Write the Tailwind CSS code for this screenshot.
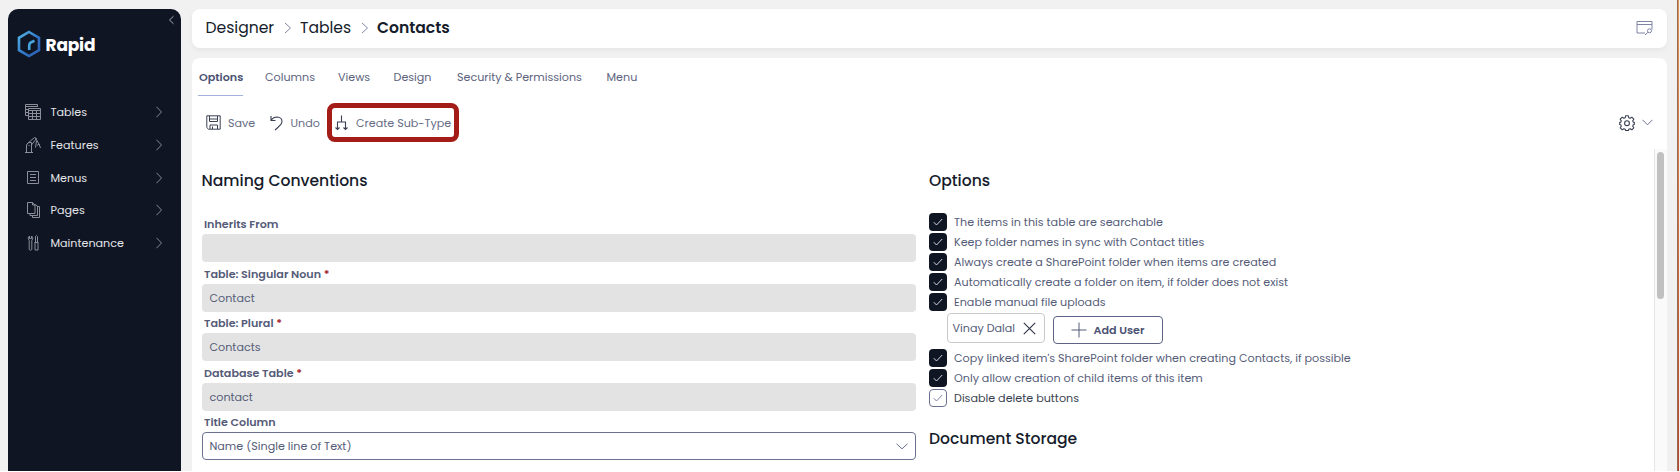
<!DOCTYPE html>
<html lang="en">
<head>
<meta charset="utf-8">
<title>Designer - Tables - Contacts</title>
<script src="https://cdn.jsdelivr.net/npm/@tailwindcss/browser@4"></script>
</head>
<body class="bg-white">
<div class="relative flex h-[471px] w-[1680px] overflow-hidden bg-[#f1f1f1] pl-[7.5px] pt-[9px] font-['Poppins','Inter',sans-serif] text-[11.15px] leading-[18px] text-[#555c78]">

  <!-- Sidebar -->
  <aside class="relative h-full w-[173.5px] shrink-0 rounded-t-[10px] bg-[#0f1523] text-[#e4e5e9]">
    <svg class="absolute right-[6px] top-[6px] h-[10px] w-[7px]" viewBox="0 0 7 10" fill="none" stroke="#a7aab3" stroke-width="1"><path d="M5.5 1.2 1.5 5l4 3.8"/></svg>
    <div class="flex items-center gap-[4.5px] pl-[9.5px] pt-[20.5px]">
      <svg class="h-[28px] w-[24px]" viewBox="0 0 24 28" fill="none">
        <defs><linearGradient id="lg" x1="0" y1="0" x2="1" y2="1"><stop offset="0" stop-color="#53b6e6"/><stop offset=".55" stop-color="#3277c8"/><stop offset="1" stop-color="#2a5db0"/></linearGradient></defs>
        <path d="M12 2 22 7.8v12.4L12 26 2 20.2V7.8z" stroke="url(#lg)" stroke-width="2.6"/>
        <path d="M12.2 20v-4.3q0-2.500 2.100-3.500l3.200-1.400" stroke="#45a5de" stroke-width="2.6"/>
      </svg>
      <span class="pt-[2px] text-[17px] font-bold leading-[26px] tracking-[-0.2px] text-white">Rapid</span>
    </div>
    <nav class="mt-[38.5px] flex flex-col pl-[16px] pr-[18.5px]">
      <a class="flex h-[32.7px] items-center"><svg class="mr-[9px] h-[18px] w-[18px]" viewBox="0 0 18 18" fill="none" stroke="#8c8f99"><path d="M4 12.5H1.5v-11h12V4M1.5 3.5h12M1.5 6.5H4M1.5 9.5H4M4.5 5.500h12v11h-12zM4.500 7.500h12M4.500 10.500h12M4.500 13.500h12M8.500 7.500v9M12.500 7.500v9"/></svg><span class="grow">Tables</span><svg class="h-[12px] w-[8px]" viewBox="0 0 8 12" fill="none" stroke="#858892"><path d="m1.500 .8 5 5.200-5 5.200"/></svg></a>
      <a class="flex h-[32.7px] items-center"><svg class="mr-[9px] h-[18px] w-[18px]" viewBox="0 0 18 18" fill="none" stroke="#8c8f99"><path d="M1 16.500h8M2.500 16.500V9l2-2.500h3V16.500M4.500 9.500h1M3 8l7.500-6.500 2 1L7.500 9M11.500 2l4 7M12.500 5l-1 6.500M15 8l-2 1.500M15 8l1.500 4"/></svg><span class="grow">Features</span><svg class="h-[12px] w-[8px]" viewBox="0 0 8 12" fill="none" stroke="#858892"><path d="m1.500 .8 5 5.200-5 5.200"/></svg></a>
      <a class="flex h-[32.7px] items-center"><svg class="mr-[9px] h-[18px] w-[18px]" viewBox="0 0 18 18" fill="none" stroke="#8c8f99"><path d="M3.500 2.500h11v12h-11zM6 5.500h6M6 8.500h6M6 11.500h6"/></svg><span class="grow">Menus</span><svg class="h-[12px] w-[8px]" viewBox="0 0 8 12" fill="none" stroke="#858892"><path d="m1.500 .8 5 5.200-5 5.200"/></svg></a>
      <a class="flex h-[32.7px] items-center"><svg class="mr-[9px] h-[18px] w-[18px]" viewBox="0 0 18 18" fill="none" stroke="#8c8f99"><path d="M3.500 1.500h5L11 4v8.500H3.500zM8.500 1.500V4H11M11 3.500l2.500 1.500v9.500H6v-2M13.500 5.500h2v11H8.500v-2"/></svg><span class="grow">Pages</span><svg class="h-[12px] w-[8px]" viewBox="0 0 8 12" fill="none" stroke="#858892"><path d="m1.500 .8 5 5.200-5 5.200"/></svg></a>
      <a class="flex h-[32.7px] items-center"><svg class="mr-[9px] h-[18px] w-[18px]" viewBox="0 0 18 18" fill="none" stroke="#8c8f99"><path d="M5.500 2v2.500h2V2q1.500 1 1.200 2.800L7.800 6.500v9q-1.300 1.500-2.600 0v-9L4.300 4.800Q4 3 5.500 2zM11.500 8V2.500l1-1 1 1V8M10.500 8.500h4M11 9v7h3V9"/></svg><span class="grow">Maintenance</span><svg class="h-[12px] w-[8px]" viewBox="0 0 8 12" fill="none" stroke="#858892"><path d="m1.500 .8 5 5.200-5 5.200"/></svg></a>
    </nav>
  </aside>

  <main class="ml-[10.500px] flex w-[1475.500px] shrink-0 flex-col">
    <!-- Breadcrumb -->
    <header class="flex h-[38.500px] shrink-0 items-center rounded-[8px] bg-white pl-[14px] pr-[14.500px] text-[15.600px] text-[#161c2b] shadow-[0_2px_5px_rgba(0,0,0,0.05)]">
      <span class="w-[69px]">Designer</span>
      <svg class="ml-[9.500px] mr-[8px] h-[12px] w-[8px]" viewBox="0 0 8 12" fill="none" stroke="#8186a0"><path d="m1 1 5.500 5L1 11"/></svg>
      <span class="w-[52px]">Tables</span>
      <svg class="ml-[9px] mr-[8px] h-[12px] w-[8px]" viewBox="0 0 8 12" fill="none" stroke="#8186a0"><path d="m1 1 5.500 5L1 11"/></svg>
      <span class="font-semibold">Contacts</span>
      <svg class="ml-auto h-[16px] w-[17px]" viewBox="0 0 17 16" fill="none" stroke="#7d84a6"><path d="M9 13H1V1.500h15v8M1 4.500h15"/><circle cx="13.500" cy="10.800" r="2"/><path d="m12 12.300-3 2.700"/></svg>
    </header>

    <section class="mt-[10.500px] flex grow flex-col rounded-t-[8px] bg-white">
      <!-- Tabs -->
      <div class="flex h-[38px] shrink-0 pl-[6.500px] text-[#5c637e]">
        <div class="flex w-[45px] flex-col border-b-[1.500px] border-[#a3b1dc] pl-[1px] pt-[10px] font-semibold text-[#4b5272]">Options</div>
        <div class="ml-[22px] w-[73px] pt-[10px]">Columns</div>
        <div class="w-[55.500px] pt-[10px]">Views</div>
        <div class="w-[63.500px] pt-[10px]">Design</div>
        <div class="w-[149.500px] whitespace-nowrap pt-[10px]">Security &amp; Permissions</div>
        <div class="pt-[10px]">Menu</div>
      </div>

      <!-- Toolbar -->
      <div class="flex h-[53px] shrink-0 items-center pl-[14px] pr-[14px] text-[#666c86]">
        <svg class="mr-[7.500px] h-[15px] w-[15px] shrink-0" viewBox="0 0 15 15" fill="none" stroke="#3a4052"><path d="M.8.800h13.400v13.400H2.500L.8 12.500zM3.500 1v5.500h8V1M3.500 4h8M4 14v-4h7.500v4M6.500 11.500V14"/></svg>
        <span class="w-[42px]">Save</span>
        <svg class="mr-[7.500px] h-[16px] w-[13px] shrink-0" viewBox="0 0 13 16" fill="none" stroke="#3a4052" stroke-width="1.100"><path d="M1 1v4.500h4.500M1 5.200Q3.500 2 7 2q5 .2 5 4.600c0 3-2.500 4.500-7 8.400"/></svg>
        <span class="w-[36px]">Undo</span>
        <div class="flex h-[39.500px] w-[132.500px] shrink-0 items-center rounded-[8px] border-[5px] border-[#a31c17] pl-[3px]">
          <svg class="mr-[8.500px] h-[16px] w-[13px] shrink-0" viewBox="0 0 13 16" fill="none" stroke="#3a4052" stroke-width="1.100"><path d="M6.500.5V7M2.500 14.500V7h8v7.500M.5 12.500l2 2 2-2M8.500 12.500l2 2 2-2"/></svg>
          <span class="whitespace-nowrap">Create Sub-Type</span>
        </div>
        <svg class="ml-auto h-[16px] w-[16px]" viewBox="0 0 16 16" fill="none" stroke="#3a4052" stroke-width="1.100" stroke-linejoin="round"><path d="M6.600.8h2.800l.4 2 1.300.5 1.700-1.100 2 2-1.100 1.700.5 1.200 1.100.3v2l-1.100.4-.5 1.300 1.100 1.700-2 2-1.700-1.100-1.300.5-.4 1.300H6.600l-.4-1.300-1.300-.5-1.700 1.100-2-2 1.100-1.700-.5-1.300-1.100-.4v-2l1.100-.3.500-1.200-1.100-1.700 2-2 1.700 1.100 1.300-.5z"/><circle cx="8" cy="8.200" r="2.400"/></svg>
        <svg class="ml-[7px] h-[7px] w-[11px]" viewBox="0 0 11 7" fill="none" stroke="#6b7190"><path d="m.5.800 5 5 5-5"/></svg>
      </div>

      <!-- Scrolling form -->
      <div class="flex grow">
        <div class="ml-[10px] w-[714px] pt-[19px]">
          <h2 class="mb-[21px] text-[15.600px] font-medium leading-[26px] text-[#161c2b]">Naming Conventions</h2>
          <div class="h-[49.500px]"><div class="h-[19px] pl-[2.500px] font-semibold">Inherits From</div><div class="h-[28px] rounded-[4px] bg-[#e3e3e3]"></div></div>
          <div class="h-[49.500px]"><div class="h-[19px] pl-[2.500px] font-semibold">Table: Singular Noun <span class="text-[#a4262c]">*</span></div><div class="flex h-[28px] items-center rounded-[4px] bg-[#e3e3e3] pl-[8px]">Contact</div></div>
          <div class="h-[49.500px]"><div class="h-[19px] pl-[2.500px] font-semibold">Table: Plural <span class="text-[#a4262c]">*</span></div><div class="flex h-[28px] items-center rounded-[4px] bg-[#e3e3e3] pl-[8px]">Contacts</div></div>
          <div class="h-[49.500px]"><div class="h-[19px] pl-[2.500px] font-semibold">Database Table <span class="text-[#a4262c]">*</span></div><div class="flex h-[28px] items-center rounded-[4px] bg-[#e3e3e3] pl-[8px]">contact</div></div>
          <div class="h-[49.500px]"><div class="h-[19px] pl-[2.500px] font-semibold">Title Column</div><div class="flex h-[28px] items-center justify-between rounded-[4px] border border-[#6b7190] pl-[7px] pr-[7px]"><span>Name (Single line of Text)</span><svg class="h-[7px] w-[12px]" viewBox="0 0 12 7" fill="none" stroke="#6b7190"><path d="m.5.800 5.500 5 5.500-5"/></svg></div></div>
        </div>

        <div class="ml-[13.500px] grow pt-[19px]">
          <h2 class="mb-[18px] text-[15.600px] font-medium leading-[26px] text-[#161c2b]">Options</h2>
          <div class="flex h-[20px] items-center"><span class="mr-[7px] flex h-[18px] w-[18px] items-center justify-center rounded-[4px] bg-[#0f1523]"><svg class="h-[8px] w-[10px]" viewBox="0 0 10 8" fill="none" stroke="#d5d7de"><path d="M.8 4.200 3.500 7l5.700-6"/></svg></span><span>The items in this table are searchable</span></div>
          <div class="flex h-[20px] items-center"><span class="mr-[7px] flex h-[18px] w-[18px] items-center justify-center rounded-[4px] bg-[#0f1523]"><svg class="h-[8px] w-[10px]" viewBox="0 0 10 8" fill="none" stroke="#d5d7de"><path d="M.8 4.200 3.500 7l5.700-6"/></svg></span><span>Keep folder names in sync with Contact titles</span></div>
          <div class="flex h-[20px] items-center"><span class="mr-[7px] flex h-[18px] w-[18px] items-center justify-center rounded-[4px] bg-[#0f1523]"><svg class="h-[8px] w-[10px]" viewBox="0 0 10 8" fill="none" stroke="#d5d7de"><path d="M.8 4.200 3.500 7l5.700-6"/></svg></span><span>Always create a SharePoint folder when items are created</span></div>
          <div class="flex h-[20px] items-center"><span class="mr-[7px] flex h-[18px] w-[18px] items-center justify-center rounded-[4px] bg-[#0f1523]"><svg class="h-[8px] w-[10px]" viewBox="0 0 10 8" fill="none" stroke="#d5d7de"><path d="M.8 4.200 3.500 7l5.700-6"/></svg></span><span>Automatically create a folder on item, if folder does not exist</span></div>
          <div class="flex h-[20px] items-center"><span class="mr-[7px] flex h-[18px] w-[18px] items-center justify-center rounded-[4px] bg-[#0f1523]"><svg class="h-[8px] w-[10px]" viewBox="0 0 10 8" fill="none" stroke="#d5d7de"><path d="M.8 4.200 3.500 7l5.700-6"/></svg></span><span>Enable manual file uploads</span></div>
          <div class="flex h-[36px] items-start pl-[18px] pt-px">
            <div class="flex h-[30px] w-[97.500px] items-center rounded-[4px] border border-[#c9c9cc] pl-[4.500px]"><span class="w-[70px]">Vinay Dalal</span><svg class="h-[13px] w-[13px]" viewBox="0 0 13 13" fill="none" stroke="#2c3244" stroke-width="1.100"><path d="m.8.800 11.400 11.400M12.200.8.800 12.200"/></svg></div>
            <div class="ml-[8px] mt-[3px] flex h-[28px] w-[110px] items-center rounded-[4px] border border-[#5c6384] pl-[17.500px] font-semibold text-[#4b5272]"><svg class="mr-[6.500px] h-[16px] w-[16px]" viewBox="0 0 16 16" fill="none" stroke="#555c78"><path d="M8 .5v15M.5 8h15"/></svg><span>Add User</span></div>
          </div>
          <div class="flex h-[20px] items-center"><span class="mr-[7px] flex h-[18px] w-[18px] items-center justify-center rounded-[4px] bg-[#0f1523]"><svg class="h-[8px] w-[10px]" viewBox="0 0 10 8" fill="none" stroke="#d5d7de"><path d="M.8 4.200 3.500 7l5.700-6"/></svg></span><span>Copy linked item's SharePoint folder when creating Contacts, if possible</span></div>
          <div class="flex h-[20px] items-center"><span class="mr-[7px] flex h-[18px] w-[18px] items-center justify-center rounded-[4px] bg-[#0f1523]"><svg class="h-[8px] w-[10px]" viewBox="0 0 10 8" fill="none" stroke="#d5d7de"><path d="M.8 4.200 3.500 7l5.700-6"/></svg></span><span>Only allow creation of child items of this item</span></div>
          <div class="flex h-[20px] items-center text-[#3a3f50]"><span class="mr-[7px] flex h-[18px] w-[18px] items-center justify-center rounded-[4px] border border-[#6b7190]"><svg class="h-[8px] w-[10px]" viewBox="0 0 10 8" fill="none" stroke="#7b819c"><path d="M.8 4.200 3.500 7l5.700-6"/></svg></span><span>Disable delete buttons</span></div>
          <h2 class="mt-[18px] text-[15.600px] font-medium leading-[26px] text-[#161c2b]">Document Storage</h2>
        </div>

        <div class="flex w-[13.500px] justify-center border-l border-[#e6e6e6] bg-[#fafafa] pt-[2.500px]"><div class="h-[147px] w-[7px] rounded-full bg-[#c0c0c0]"></div></div>
      </div>
    </section>
  </main>

  <div class="-mt-[9px] ml-[9.500px] h-[471px] w-[2.500px] shrink-0 border-l border-[#9b6a50] bg-linear-to-b from-[#dd9758] to-[#b8452c]"></div>
</div>
</body>
</html>
